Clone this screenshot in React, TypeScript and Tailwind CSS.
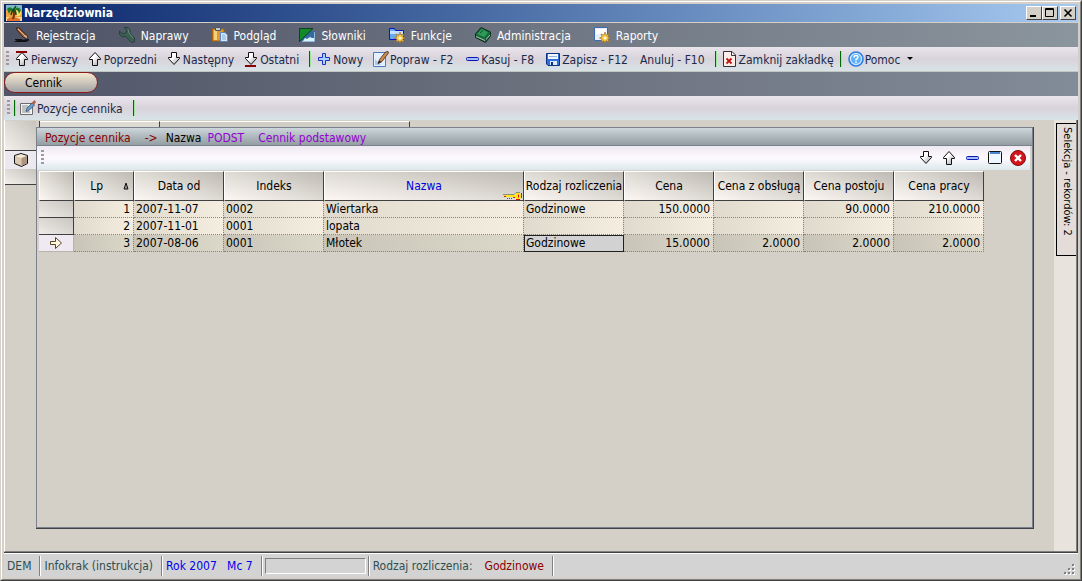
import React from 'react';

type Row = {
  lp: string;
  date: string;
  index: string;
  name: string;
  kind: string;
  price: string;
  service: string;
  idle: string;
  work: string;
};

const rows: Row[] = [
  { lp: '1', date: '2007-11-07', index: '0002', name: 'Wiertarka', kind: 'Godzinowe', price: '150.0000', service: '', idle: '90.0000', work: '210.0000' },
  { lp: '2', date: '2007-11-01', index: '0001', name: 'lopata', kind: '', price: '', service: '', idle: '', work: '' },
  { lp: '3', date: '2007-08-06', index: '0001', name: 'Młotek', kind: 'Godzinowe', price: '15.0000', service: '2.0000', idle: '2.0000', work: '2.0000' },
];

/* Icons */

const Svg: React.FC<{ w?: number; h?: number; children: React.ReactNode }> = ({ w = 16, h = 16, children }) => (
  <svg width={w} height={h} viewBox={`0 0 ${w} ${h}`} fill="none" className="shrink-0" aria-hidden="true">
    {children}
  </svg>
);

const UP = 'M7 1.5L12.5 7.5V8.5H9.5V14.5H4.5V8.5H1.5V7.5Z';
const DOWN = 'M7 13.5L1.5 7.5V6.5H4.5V1.5H9.5V6.5H12.5V7.5Z';

const ArrowIcon: React.FC<{ d: string; bar?: 'top' | 'bottom' }> = ({ d, bar }) => (
  <Svg w={15}>
    <defs>
      <linearGradient id="arrowFill" x1="0" y1="0" x2="1" y2="1">
        <stop offset="0.4" stopColor="#fff" />
        <stop offset="1" stopColor="#9a9aa2" />
      </linearGradient>
    </defs>
    <path d={d} fill="url(#arrowFill)" stroke="#111" />
    {bar === 'top' && <path d="M1 1H12" stroke="#8b0000" strokeWidth="2" />}
    {bar === 'bottom' && <path d="M1 15H12" stroke="#8b0000" strokeWidth="2" />}
  </Svg>
);

const PalmIcon = () => (
  <Svg>
    <rect width="16" height="16" fill="#f4a23a" />
    <rect width="16" height="5" fill="#7fb7c4" />
    <circle cx="12" cy="8" r="3" fill="#ffe066" />
    <path d="M0 12H16V16H0Z" fill="#f6d98a" />
    <path d="M1 14Q5 10 14 14V16H1Z" fill="#e0702a" />
    <path d="M7 5Q9 9 7 14" stroke="#6b2f10" strokeWidth="2" />
    <path d="M8 5Q4 0 1 4L3 9Q4 5 8 5Q12 4 13 9L15 5Q12 0 8 5Z" fill="#1c7a2e" />
    <path d="M8 4Q6 5 5 10M8 4L10 1M8 5Q10 6 10 10" stroke="#0d4a1c" strokeWidth="1.5" />
  </Svg>
);

const PenIcon = () => (
  <Svg>
    <path d="M2.5 1L4.5 0.5L13 8.5V11.5L9.5 10.5L3 3Z" fill="#a4643c" stroke="#2a160c" strokeWidth="0.8" />
    <path d="M4 2L11 9" stroke="#f0b98c" />
    <path d="M10 9L12.5 8.5L13 11.5Z" fill="#e8c8a0" />
    <path d="M0 15L3 13H6L15 12V13.5L12 15Z" fill="#111116" />
    <path d="M1 12.5H8" stroke="#111116" />
  </Svg>
);

const WrenchIcon = () => (
  <Svg>
    <path d="M5 0.5L9 0.5L11 3V6L15.5 11V15L12.5 15.5L6.5 9.5L3 10L0.5 7.5V4L4 7L7 5.5L7.5 3Z" fill="#3a5e50" stroke="#223e36" strokeWidth="0.8" />
    <path d="M9 2L10 6L14 11" stroke="#6a8c7c" />
  </Svg>
);

const PasteIcon = () => (
  <Svg>
    <path d="M0.5 2H12V14H0.5Z" fill="#e09a2c" stroke="#a86512" />
    <path d="M2 3H5V13H2Z" fill="#f8ce7c" />
    <path d="M3.5 0.5H8.5V3.5H3.5Z" fill="#c3cad6" stroke="#4b5568" />
    <path d="M8.5 5.5H13L15.5 8V14.5H8.5Z" fill="#dcebfb" stroke="#5b86c4" />
    <path d="M10 8H13M10 10H14M10 12H14" stroke="#7ea8dc" />
  </Svg>
);

const DictionaryIcon = () => (
  <Svg>
    <path d="M2 4H16V15H2Z" fill="#346a9c" />
    <path d="M4 14L6 11L8 12L11 10L13 11H15V14Z" fill="#d9f1f8" />
    <path d="M0.5 1.5H14L0.5 14.5Z" fill="#128a28" stroke="#0a2c14" strokeWidth="0.8" />
    <path d="M3 14.5H15.5V5" stroke="#8fbbe0" />
  </Svg>
);

const STAR = 'M11 5L12 8.2L15 7L13.8 9.8L16 11L13.8 12.2L15 15L12 13.8L11 16L9.8 13.8L7 15L8 12.2L5.5 11L8 9.8L7 7L9.8 8.2Z';

const FunctionIcon = () => (
  <Svg>
    <path d="M0.5 1.5H5.5L6.5 3.5H14.5V12.5H0.5Z" fill="#66a8f4" stroke="#0b14b4" />
    <path d="M1 4H14V7H1Z" fill="#c4e2ff" />
    <path d={STAR} fill="#f7c846" stroke="#a9701c" strokeWidth="0.7" />
    <circle cx="11" cy="11" r="1.5" fill="#fffbd0" />
  </Svg>
);

const ReportIcon = () => (
  <Svg>
    <path d="M0.5 0.5H13.5V13.5H0.5Z" fill="#e6f0fd" stroke="#3b6cb2" />
    <path d="M2 2H12V7H2Z" fill="#fff" />
    <path d={STAR} fill="#f7c846" stroke="#a9701c" strokeWidth="0.7" />
    <circle cx="11" cy="11" r="1.5" fill="#fffbd0" />
  </Svg>
);

const BookIcon = () => (
  <Svg>
    <path d="M0.5 7L6 0.5L15.5 5V9L10.5 15.5L0.5 10.5Z" fill="#176a3a" stroke="#0c2b1a" />
    <path d="M2 7L7 2L13 5.5L9.5 10Z" fill="#2f9a5a" />
    <path d="M1 9.5L10 13.5L15 8" stroke="#aebfb5" />
    <path d="M10.5 11V15" stroke="#8b2020" />
    <path d="M5 6L8 3.5" stroke="#0f4d28" />
  </Svg>
);

const PlusIcon = () => (
  <Svg w={15}>
    <path d="M5.5 2.5H8.5V6.5H12.5V9.5H8.5V13.5H5.5V9.5H1.5V6.5H5.5Z" fill="#a9d0ff" stroke="#1a2fc8" />
  </Svg>
);

const MinusIcon = () => (
  <Svg w={15}>
    <rect x="1.5" y="6.5" width="12" height="3" rx="1" fill="#a4bdfa" stroke="#0a18b0" />
  </Svg>
);

const EditIcon = () => (
  <Svg>
    <path d="M0.5 1.5H12.5V15.5H0.5Z" fill="#e4f0fd" stroke="#4d7cbc" />
    <path d="M2 8L8 14H2Z" fill="#a9c8ee" />
    <path d="M12.5 1L15 0.5L15.5 2L9 10.5L5 12.5L6.5 8.5Z" fill="#c98a52" stroke="#4a2a12" strokeWidth="0.8" />
    <path d="M5 13L6 9.5L8.5 11Z" fill="#222" />
  </Svg>
);

const NoteIcon = () => (
  <Svg>
    <path d="M0.5 3.5H12.5V14.5H0.5Z" fill="#f3f3f3" stroke="#6c6c6c" />
    <path d="M2 6H8M2 8H7M2 10H6M2 12H10" stroke="#8b8b8b" />
    <path d="M12 3L14.5 5L9 10.5L6 11.5L7 8Z" fill="#6a9cc9" stroke="#30455e" strokeWidth="0.7" />
    <path d="M11.5 3L14.5 0L16 2L14 5Z" fill="#b0604c" />
  </Svg>
);

const SaveIcon = () => (
  <Svg w={15}>
    <path d="M0.5 2.5H13.5V14.5H2L0.5 13Z" fill="#2f6fd8" stroke="#0c3189" />
    <path d="M2 3H12V8H2Z" fill="#f2f8ff" />
    <path d="M3 5.5H11" stroke="#8fb3e3" />
    <path d="M4 10H11V14H4Z" fill="#dfe9f7" />
    <path d="M5 11H7V14H5Z" fill="#0c3189" />
  </Svg>
);

const CloseTabIcon = () => (
  <Svg w={15}>
    <path d="M0.5 0.5H9L12.5 4V15.5H0.5Z" fill="#fbeee8" stroke="#33333a" />
    <path d="M8.5 0.5V4.5H12.5" stroke="#33333a" />
    <path d="M3.5 7.5L8.5 12.5M8.5 7.5L3.5 12.5" stroke="#c01414" strokeWidth="1.8" />
  </Svg>
);

const HelpIcon = () => (
  <Svg>
    <circle cx="8" cy="8" r="7" fill="#d3e9ff" stroke="#2a7de0" strokeWidth="1.6" />
    <circle cx="8" cy="8" r="5" fill="#5fb0fa" />
    <path d="M6 6.5Q6 4.5 8 4.5Q10 4.5 10 6.3Q10 7.4 8 8.4V9.5M8 10.5V12" stroke="#fff" strokeWidth="1.5" />
  </Svg>
);

const CubeIcon = () => (
  <Svg>
    <path d="M1.5 3.5L8 1.5L14.5 3.5V11.5L8.5 14.5L1.5 11.5Z" fill="#dcc8b0" stroke="#111" />
    <path d="M2.5 4L8 2.2L13.5 4L8.5 6Z" fill="#f5eada" />
    <path d="M8.5 6L14 4V11.2L8.5 14Z" fill="#ab9580" />
  </Svg>
);

const CurrentRowIcon = () => (
  <Svg w={14} h={14}>
    <path d="M1.5 5.5H6.5V1.5L12.5 7L6.5 12.5V8.5H1.5Z" fill="#fdf6e0" stroke="#5a4420" />
  </Svg>
);

const KeyIcon = () => (
  <Svg w={20} h={8}>
    <path d="M1 3H13L14 1H18L19 3V6L18 7H14L12 5H3Z" fill="#ffe81a" />
    <path d="M1 2.5H12L14 0.5H18" stroke="#8a8a8a" />
    <path d="M2 4.5H4M5 6.5H6M7 6.5H8M9 6.5H10M11 5.5H13M14 7.5H18M19.5 1V6" stroke="#e01010" />
    <path d="M16.5 2.5V5.5" stroke="#e01010" />
  </Svg>
);

const WindowIcon = () => (
  <Svg w={14} h={14}>
    <rect x="0.5" y="0.5" width="13" height="12" rx="1" fill="#eef7ff" stroke="#111" />
    <path d="M2 1H12V3H2Z" fill="#4a86d0" />
  </Svg>
);

const CloseIcon = () => (
  <Svg>
    <circle cx="8" cy="8" r="7.5" fill="#d3141a" stroke="#7a0a0c" />
    <path d="M5 5L11 11M11 5L5 11" stroke="#fff" strokeWidth="2.4" />
  </Svg>
);

/* Small building blocks */

const Grip = () => (
  <div className="w-[3px] h-4 shrink-0 bg-[repeating-linear-gradient(to_bottom,#9a9aa0_0px,#9a9aa0_2px,transparent_2px,transparent_4px)]" />
);

const Separator = () => <div className="w-0.5 h-4 shrink-0 bg-[#006a00] border-r border-[#9be89b]" />;

const StatusLine = () => <div className="w-0.5 h-5 shrink-0 bg-[#808080] border-r border-white" />;

const ToolButton: React.FC<{ icon?: React.ReactNode; label: string; children?: React.ReactNode }> = ({ icon, label, children }) => (
  <button type="button" className="flex items-center gap-px whitespace-nowrap text-[#1b2a4a]">
    {icon}
    <span className="pt-0.5">{label}</span>
    {children}
  </button>
);

const CaptionButton: React.FC<{ label: string; children: React.ReactNode }> = ({ label, children }) => (
  <button
    type="button"
    aria-label={label}
    className="w-4 h-3.5 flex items-center justify-center bg-[#d4d0c8] border border-t-white border-l-white border-r-[#404040] border-b-[#404040]"
  >
    {children}
  </button>
);

const HeadCell: React.FC<{ label?: string; className?: string; children?: React.ReactNode }> = ({ label, className = '', children }) => (
  <th
    className={`relative h-[30px] p-0 text-center font-normal whitespace-nowrap overflow-hidden bg-linear-to-tr from-[#fcf7f3] via-[#dedad4] to-[#bebab3] border border-t-white border-l-white border-r-[#404040] border-b-[#404040] ${className}`}
  >
    {label}
    {children}
  </th>
);

const Cell: React.FC<{ value: string; right?: boolean; current?: boolean; focused?: boolean }> = ({ value, right, current, focused }) => {
  const tone = current ? 'bg-linear-to-r from-[#c8c4b8] to-[#dcd8c9]' : 'bg-linear-to-r from-[#dfdacd] to-[#f5eee0]';
  return (
    <td
      className={`h-[17px] pt-px pb-0 leading-[15px] whitespace-nowrap border-r border-b border-dotted border-[#85857a] ${tone} ${right ? 'px-[3px] text-right' : 'px-0.5 text-left'} ${focused ? 'bg-[#d2d2d2] bg-none outline outline-[#202020] -outline-offset-1' : ''}`}
    >
      {value}
    </td>
  );
};

const menu = [
  { icon: <PenIcon />, label: 'Rejestracja' },
  { icon: <WrenchIcon />, label: 'Naprawy' },
  { icon: <PasteIcon />, label: 'Podgląd' },
  { icon: <DictionaryIcon />, label: 'Słowniki' },
  { icon: <FunctionIcon />, label: 'Funkcje' },
  { icon: <BookIcon />, label: 'Administracja' },
  { icon: <ReportIcon />, label: 'Raporty' },
];

const PriceTable = () => (
  <table className="table-fixed border-separate border-spacing-0 w-[945px]">
    <colgroup>
      <col className="w-[35px]" />
      <col className="w-[60px]" />
      <col className="w-[90px]" />
      <col className="w-[100px]" />
      <col className="w-[200px]" />
      <col className="w-[100px]" />
      <col className="w-[90px]" />
      <col className="w-[90px]" />
      <col className="w-[90px]" />
      <col className="w-[90px]" />
    </colgroup>
    <thead>
      <tr>
        <HeadCell />
        <HeadCell>
          <span className="flex items-center justify-end gap-5 pr-1">
            Lp
            <Svg w={6} h={8}>
              <path d="M3 1L5 7H1Z" fill="#999" stroke="#111" />
            </Svg>
          </span>
        </HeadCell>
        <HeadCell label="Data od" />
        <HeadCell label="Indeks" />
        <HeadCell label="Nazwa" className="text-[#0000e0]">
          <span className="absolute right-px bottom-0">
            <KeyIcon />
          </span>
        </HeadCell>
        <HeadCell label="Rodzaj rozliczenia" />
        <HeadCell label="Cena" />
        <HeadCell label="Cena z obsługą" />
        <HeadCell label="Cena postoju" />
        <HeadCell label="Cena pracy" />
      </tr>
    </thead>
    <tbody>
      {rows.map((row) => {
        const current = row.lp === '3';
        return (
          <tr key={row.lp}>
            <td
              className={`h-[17px] p-0 border-r border-b ${current ? 'bg-[#efeaf2] border-[#b8b4ac]' : 'bg-linear-to-tr from-[#eeebe8] to-[#c9c6c0] border-[#404040]'}`}
            >
              {current && (
                <span className="flex justify-center">
                  <CurrentRowIcon />
                </span>
              )}
            </td>
            <Cell value={row.lp} right current={current} />
            <Cell value={row.date} current={current} />
            <Cell value={row.index} current={current} />
            <Cell value={row.name} current={current} />
            <Cell value={row.kind} current={current} focused={current} />
            <Cell value={row.price} right current={current} />
            <Cell value={row.service} right current={current} />
            <Cell value={row.idle} right current={current} />
            <Cell value={row.work} right current={current} />
          </tr>
        );
      })}
    </tbody>
  </table>
);

const App: React.FC = () => {
  return (
    <div className="min-h-screen flex flex-col border border-t-[#d4d0c8] border-l-[#d4d0c8] border-r-[#404040] border-b-[#404040] bg-[#d4d0c8] text-[12px] leading-4 text-black font-['DejaVu_Sans_Condensed','Noto_Sans',sans-serif]">
      <div className="grow flex flex-col p-0.5 border border-t-white border-l-white border-r-[#808080] border-b-[#808080]">
        {/* Title bar */}
        <header className="h-[18px] shrink-0 flex items-center gap-0.5 px-0.5 bg-linear-to-r from-[#0a246a] to-[#a6caf0]">
          <PalmIcon />
          <h1 className="grow font-bold text-white">Narzędziownia</h1>
          <div className="flex">
            <CaptionButton label="Minimalizuj">
              <Svg w={10} h={10}>
                <path d="M1 8H7" stroke="#000" strokeWidth="2" />
              </Svg>
            </CaptionButton>
            <CaptionButton label="Maksymalizuj">
              <Svg w={10} h={10}>
                <path d="M0.5 0.5H8.5V8.5H0.5ZM0 1.5H9" stroke="#000" />
              </Svg>
            </CaptionButton>
          </div>
          <CaptionButton label="Zamknij">
            <Svg w={10} h={10}>
              <path d="M1.5 1.5L8.5 8.5M8.5 1.5L1.5 8.5" stroke="#000" strokeWidth="1.6" />
            </Svg>
          </CaptionButton>
        </header>

        {/* Menu */}
        <nav className="mt-px h-6 shrink-0 flex items-center gap-[23px] px-2.5 text-white bg-linear-to-r from-[#4d5265] via-[#6f7683] to-[#8b959d]">
          {menu.map((item) => (
            <button key={item.label} type="button" className="flex items-center gap-1.5 whitespace-nowrap">
              {item.icon}
              <span className="pt-0.5">{item.label}</span>
            </button>
          ))}
        </nav>

        {/* Toolbar */}
        <div className="h-[25px] shrink-0 flex items-center gap-2.5 px-0.5 border-b border-[#c4c4c0] bg-linear-to-b from-[#eae5ec] via-[#d8d3da] to-[#d8e4e8]">
          <div className="flex items-center gap-1.5">
            <Grip />
            <ToolButton icon={<ArrowIcon d={UP} bar="top" />} label="Pierwszy" />
          </div>
          <ToolButton icon={<ArrowIcon d={UP} />} label="Poprzedni" />
          <ToolButton icon={<ArrowIcon d={DOWN} />} label="Następny" />
          <ToolButton icon={<ArrowIcon d={DOWN} bar="bottom" />} label="Ostatni" />
          <div className="flex items-center gap-1.5">
            <Separator />
            <ToolButton icon={<PlusIcon />} label="Nowy" />
          </div>
          <div className="flex items-center gap-3">
            <ToolButton icon={<EditIcon />} label="Popraw - F2" />
            <ToolButton icon={<MinusIcon />} label="Kasuj - F8" />
            <ToolButton icon={<SaveIcon />} label="Zapisz - F12" />
            <ToolButton label="Anuluj - F10" />
          </div>
          <div className="flex items-center gap-1.5">
            <Separator />
            <ToolButton icon={<CloseTabIcon />} label="Zamknij zakładkę" />
            <Separator />
            <ToolButton icon={<HelpIcon />} label="Pomoc">
              <span className="ml-1.5">
                <Svg w={6} h={4}>
                  <path d="M0 0H6L3 3Z" fill="#000" />
                </Svg>
              </span>
            </ToolButton>
          </div>
        </div>

        {/* Tabs */}
        <div className="h-6 shrink-0 flex items-start bg-linear-to-r from-[#505568] via-[#6c717e] to-[#828b98]">
          <button
            type="button"
            className="w-[94px] h-[21px] pl-5 text-left rounded-full border border-[#8b1a1a] bg-linear-to-b from-[#f3ead2] via-[#cdc6bb] to-[#9ea1a6]"
          >
            Cennik
          </button>
        </div>

        {/* Tab toolbar */}
        <div className="h-6 shrink-0 flex items-center gap-1 px-[3px] bg-linear-to-b from-[#eae5ec] via-[#d8d3da] to-[#d8e4e8]">
          <Grip />
          <Separator />
          <div className="flex items-center gap-2.5">
            <ToolButton icon={<NoteIcon />} label="Pozycje cennika" />
            <Separator />
          </div>
        </div>

        {/* Work area */}
        <div className="grow flex flex-col border-r border-b border-[#404040]">
          <div className="grow flex border-l border-l-white border-r border-r-[#808080] border-b border-b-[#808080]">
            <aside className="w-[31px] shrink-0 pt-px">
              <div className="h-[30px] border-b border-[#404040] bg-linear-to-tr from-[#f4f0ec] to-[#c6c3bc]" />
              <div className="h-[18px] flex items-center justify-center bg-[#ece8f0]">
                <CubeIcon />
              </div>
              <div className="h-4 border-b border-[#404040] bg-linear-to-tr from-[#f4f0ec] to-[#c6c3bc]" />
            </aside>

            <main className="grow flex flex-col pt-px pr-5 pb-[22px]">
              <div className="h-1.5 shrink-0 flex">
                <div className="w-1 border-r border-[#404040]" />
                <div className="w-[120px] border-t border-t-white border-r border-r-[#404040] bg-[#dedad4]" />
                <div className="w-[250px] border-t border-t-white border-r border-r-[#404040] bg-[#d0cdc6]" />
              </div>

              <section className="grow flex flex-col border-r border-b border-[#40404a]">
                <div className="grow flex flex-col border border-[#7a808c]">
                  <h2 className="h-[18px] shrink-0 flex items-center pt-0.5 px-2 whitespace-nowrap border-b border-[#7a808c] bg-linear-to-b from-[#cdd6da] to-[#939ea2]">
                    <span className="text-[#8b0000]">Pozycje cennika</span>
                    <span className="ml-3.5 text-[#8b0000]">-&gt;</span>
                    <span className="ml-2">Nazwa</span>
                    <span className="ml-1.5 text-[#9400d3]">PODST</span>
                    <span className="ml-3.5 text-[#9400d3]">Cennik podstawowy</span>
                  </h2>
                  <div className="mr-0.5 h-[25px] shrink-0 flex items-center gap-2 px-1 border-b border-[#d4d0c8] bg-linear-to-b from-[#efe9f1] via-[#fdfaff] to-[#dce8ec]">
                    <Grip />
                    <div className="grow" />
                    <button type="button" aria-label="Następny rekord">
                      <ArrowIcon d={DOWN} />
                    </button>
                    <button type="button" aria-label="Poprzedni rekord">
                      <ArrowIcon d={UP} />
                    </button>
                    <button type="button" aria-label="Zwiń">
                      <MinusIcon />
                    </button>
                    <button type="button" aria-label="Okno">
                      <WindowIcon />
                    </button>
                    <button type="button" aria-label="Zamknij panel">
                      <CloseIcon />
                    </button>
                  </div>
                  <div className="pl-0.5">
                    <PriceTable />
                  </div>
                </div>
              </section>
            </main>

            <aside className="w-[22px] shrink-0 pt-[3px] pl-0.5 bg-[#e8e4dd]">
              <button
                type="button"
                className="w-full h-[133px] flex items-center pt-[3px] text-[11px] whitespace-nowrap [writing-mode:vertical-rl] border-t border-b border-l border-black bg-[#e4dcd8]"
              >
                Selekcja - rekordów: 2
              </button>
            </aside>
          </div>
        </div>

        {/* Status bar */}
        <footer className="h-6 shrink-0 flex items-center pt-px border-t border-white bg-[#d3d3d3] text-[#2f4f4f]">
          <span className="pl-[3px] pr-2">DEM</span>
          <StatusLine />
          <span className="pl-[3px] pr-2">Infokrak (instrukcja)</span>
          <StatusLine />
          <span className="pl-[3px] pr-2 whitespace-pre text-[#0000f0]">Rok 2007   Mc 7</span>
          <StatusLine />
          <div className="px-0.5">
            <div className="w-[101px] h-4 border border-t-[#808080] border-l-[#808080] border-r-white border-b-white" />
          </div>
          <StatusLine />
          <span className="pl-[3px] pr-3">Rodzaj rozliczenia:</span>
          <span className="pr-2 text-[#8b0000]">Godzinowe</span>
          <StatusLine />
          <div className="grow" />
          <div className="self-end">
            <Svg w={14} h={14}>
              <path d="M9 2H11V4H9ZM5 6H7V8H5ZM9 6H11V8H9ZM1 10H3V12H1ZM5 10H7V12H5ZM9 10H11V12H9Z" fill="#fff" />
              <path d="M8 1H10V3H8ZM4 5H6V7H4ZM8 5H10V7H8ZM0 9H2V11H0ZM4 9H6V11H4ZM8 9H10V11H8Z" fill="#808080" />
            </Svg>
          </div>
        </footer>
      </div>
    </div>
  );
};

export default App;
